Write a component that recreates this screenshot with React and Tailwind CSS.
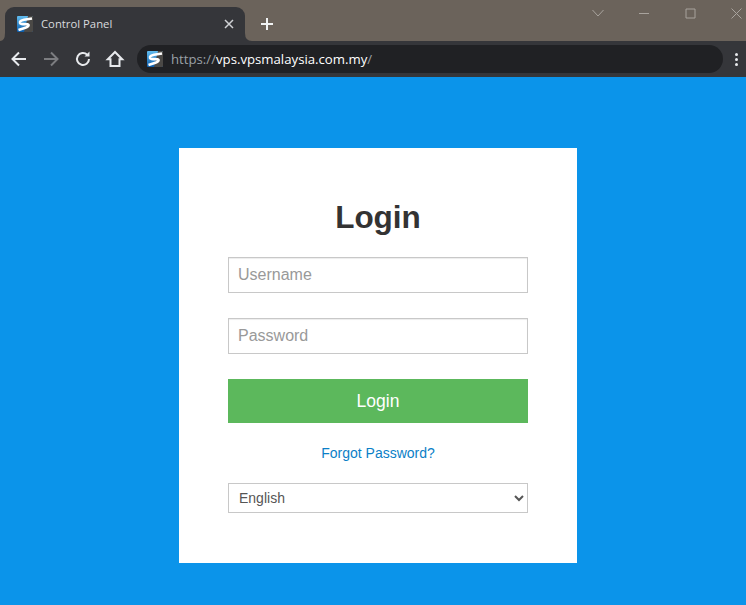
import React from 'react';

const Favicon = () => (
  <svg width="16" height="16" viewBox="0 0 16 16" className="shrink-0">
    <defs>
      <linearGradient id="favBlue" x1="0" y1="0" x2="0" y2="1">
        <stop offset="0" stopColor="#62bdf0" />
        <stop offset="1" stopColor="#0a5aa8" />
      </linearGradient>
    </defs>
    <rect width="16" height="16" rx="1" fill="url(#favBlue)" />
    <path d="M11 0H15A1 1 0 0 1 16 1V15A1 1 0 0 1 15 16H7Z" fill="#4b4946" />
    <path
      d="M15 2.500 L7 3.800 Q2.400 4.800 3 6.800 Q3.400 8 6 8.100 L10.600 8.300 Q12.400 8.800 11 10.300 Q10 11.200 8.400 11.700 L1.500 14"
      fill="none"
      stroke="#ffffff"
      strokeWidth="2.600"
    />
  </svg>
);

const ToolIcon = ({ className, children }) => (
  <svg
    width="20"
    height="20"
    viewBox="0 0 20 20"
    fill="none"
    stroke="currentColor"
    strokeWidth="2"
    className={className}
  >
    {children}
  </svg>
);

const Toolbar = () => (
  <div className="h-[36px] bg-[#35363a] flex items-center">
    <ToolIcon className="ml-[9px] text-[#e8eaed]">
      <path d="M17 10H4M10 3.500 3.500 10l6.500 6.500" />
    </ToolIcon>
    <ToolIcon className="ml-[12px] text-[#7c7d80]">
      <path d="M3 10h13M10 3.500l6.500 6.500-6.500 6.500" />
    </ToolIcon>
    <ToolIcon className="ml-[12px] text-[#e8eaed]">
      <path d="M16 10a6 6 0 1 1-1.800-4.300" />
      <path d="M16.500 2.500v5h-5" fill="currentColor" stroke="none" />
    </ToolIcon>
    <ToolIcon className="ml-[12px] text-[#e8eaed]">
      <path d="M10 3 2.800 10.200H5.500V17h9v-6.800h2.700Z" />
    </ToolIcon>
    <div className="ml-[12px] w-[586px] h-[28px] rounded-full bg-[#202124] flex items-center pl-[10px] text-[13.2px] [font-family:'Open_Sans',sans-serif]">
      <Favicon />
      <span className="ml-[8px] pt-[1px] text-[#9aa0a6]">https://</span>
      <span className="pt-[1px] text-white">vps.vpsmalaysia.com.my</span>
      <span className="pt-[1px] text-[#9aa0a6]">/</span>
    </div>
    <div className="ml-[12px] flex flex-col gap-[2px]">
      <span className="w-[3px] h-[3px] rounded-full bg-[#e8eaed]" />
      <span className="w-[3px] h-[3px] rounded-full bg-[#e8eaed]" />
      <span className="w-[3px] h-[3px] rounded-full bg-[#e8eaed]" />
    </div>
  </div>
);

const TitleBar = () => (
  <div className="h-[41px] bg-[#6b635b] flex items-end relative">
    {/* flared feet of the active tab */}
    <svg width="5" height="8" viewBox="0 0 5 8" className="absolute left-0 bottom-0 text-[#35363a]" fill="currentColor">
      <path d="M5 0V8H0Q5 8 5 0Z" />
    </svg>
    <svg width="7" height="8" viewBox="0 0 7 8" className="absolute left-[245px] bottom-0 text-[#35363a]" fill="currentColor">
      <path d="M0 0V8H7Q0 8 0 0Z" />
    </svg>
    <div className="ml-[5px] w-[240px] h-[34px] bg-[#35363a] rounded-t-[9px] flex items-center pl-[12px] pr-[10px] text-[11.3px] text-[#d9dbde] [font-family:'Open_Sans',sans-serif]">
      <Favicon />
      <span className="ml-[8px]">Control Panel</span>
      <svg width="10" height="10" viewBox="0 0 10 10" className="ml-auto mr-[1px] text-[#d0d2d5]" stroke="currentColor" strokeWidth="1.500">
        <path d="M1 1l8 8M9 1 1 9" />
      </svg>
    </div>
    <svg width="14" height="14" viewBox="0 0 14 14" className="ml-[15px] mb-[10px] text-[#f1f3f4]" stroke="currentColor" strokeWidth="2">
      <path d="M7 1v12M1 7h12" />
    </svg>
    {/* window controls */}
    <div className="ml-auto self-start flex items-center h-[26px] text-[#a8a39d]">
      <svg width="14" height="10" viewBox="0 0 14 10" fill="none" stroke="currentColor" className="mr-[33px]">
        <path d="M1.500 2 7 8l5.500-6" />
      </svg>
      <svg width="12" height="10" viewBox="0 0 12 10" fill="none" stroke="currentColor" className="mr-[35px]">
        <path d="M1 5.500h10" />
      </svg>
      <svg width="11" height="11" viewBox="0 0 11 11" fill="none" stroke="currentColor" className="mr-[35px]">
        <path d="M1 1h9v9H1z" />
      </svg>
      <svg width="11" height="11" viewBox="0 0 11 11" fill="none" stroke="currentColor" className="mr-[4px]">
        <path d="M.500.500l10 10M10.500.500l-10 10" />
      </svg>
    </div>
  </div>
);

export default function App() {
  return (
    <div className="w-[746px] h-[605px] overflow-hidden flex flex-col bg-[#0b94ea] [font-family:'Liberation_Sans',Arial,sans-serif]">
      <TitleBar />
      <Toolbar />
      <div className="ml-[179px] mt-[71px] w-[398px] h-[415px] bg-white px-[49px] pt-[49px]">
        <h1 className="text-[31.5px] leading-[40px] font-bold text-center text-[#333333]">Login</h1>
        <input
          placeholder="Username"
          className="mt-[20px] block w-full h-[36px] px-[9px] border border-[#c8c8c8] text-[16px] outline-none shadow-[inset_0_1px_1px_rgba(0,0,0,0.075)] placeholder:text-[#999999]"
        />
        <input
          type="password"
          placeholder="Password"
          className="mt-[25px] block w-full h-[36px] px-[9px] border border-[#c8c8c8] text-[16px] outline-none shadow-[inset_0_1px_1px_rgba(0,0,0,0.075)] placeholder:text-[#999999]"
        />
        <button className="mt-[25px] block w-full h-[44px] bg-[#5cb85c] text-white text-[17.5px]">Login</button>
        <a href="#" className="mt-[20px] block text-center text-[14px] leading-[20px] text-[#0b7fc7]">Forgot Password?</a>
        <select className="mt-[20px] block w-full h-[30px] pl-[6px] border border-[#c8c8c8] bg-white text-[14px] text-[#555555]">
          <option>English</option>
        </select>
      </div>
    </div>
  );
}
